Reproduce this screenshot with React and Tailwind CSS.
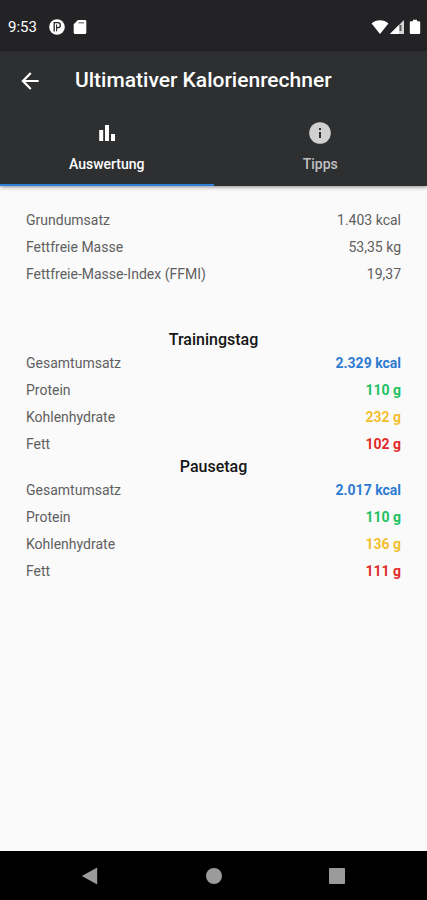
import React from "react";

const basics = [
  { label: "Grundumsatz", value: "1.403 kcal" },
  { label: "Fettfreie Masse", value: "53,35 kg" },
  { label: "Fettfreie-Masse-Index (FFMI)", value: "19,37" },
];

const days = [
  {
    title: "Trainingstag",
    rows: [
      { label: "Gesamtumsatz", value: "2.329 kcal", tone: "font-bold text-[#2f7bd2]" },
      { label: "Protein", value: "110 g", tone: "font-bold text-[#1fc163]" },
      { label: "Kohlenhydrate", value: "232 g", tone: "font-bold text-[#f3bf31]" },
      { label: "Fett", value: "102 g", tone: "font-bold text-[#e12a2a]" },
    ],
  },
  {
    title: "Pausetag",
    rows: [
      { label: "Gesamtumsatz", value: "2.017 kcal", tone: "font-bold text-[#2f7bd2]" },
      { label: "Protein", value: "110 g", tone: "font-bold text-[#1fc163]" },
      { label: "Kohlenhydrate", value: "136 g", tone: "font-bold text-[#f3bf31]" },
      { label: "Fett", value: "111 g", tone: "font-bold text-[#e12a2a]" },
    ],
  },
];

function StatusBar() {
  return (
    <div className="flex h-[51px] items-center justify-between bg-[#232325] pl-2 pr-1 pt-[2px] text-white">
      <div className="flex items-center gap-2">
        <span className="mr-1 text-[15px] leading-5">9:53</span>
        <svg viewBox="0 0 16 16" className="size-4" aria-hidden="true">
          <circle cx="8" cy="8" r="7.8" fill="#fff" />
          <path d="M5.2 12.6V3.700h3.600a2.500 2.500 0 0 1 0 5H7.600" fill="none" stroke="#232325" strokeWidth="1.3" />
          <path d="M7.600 5.600v6.600" stroke="#232325" strokeWidth="1.100" />
        </svg>
        <svg viewBox="0 0 14 16" className="h-4 w-3.5" aria-hidden="true">
          <path d="M5 1h7a1.300 1.300 0 0 1 1.300 1.300v11.400A1.300 1.300 0 0 1 12 15H2a1.300 1.300 0 0 1-1.300-1.300V5.300z" fill="#fff" />
          <path d="M5.500 3h5.500v1.500H5.500z" fill="#8a8a8d" />
        </svg>
      </div>
      <div className="flex items-center">
        <svg viewBox="0 0 18 16" className="h-4 w-[18px]" aria-hidden="true">
          <path d="M9 15 .6 4.400C3 2.400 5.800 1.300 9 1.300s6 1.100 8.400 3.100z" fill="#fff" />
        </svg>
        <svg viewBox="0 0 16 16" className="mr-[2px] size-4" aria-hidden="true">
          <path d="M15 1v14H1z" fill="#d6d6d7" />
          <path d="M10 6v9H1z" fill="#fff" />
          <path d="M10.500 6H12.500v6h-2z" fill="#5b5b5d" />
        </svg>
        <svg viewBox="0 0 16 16" className="size-4" aria-hidden="true">
          <path d="M6 .8h4v1.400h2.200a1 1 0 0 1 1 1V14a1 1 0 0 1-1 1H3.800a1 1 0 0 1-1-1V3.200a1 1 0 0 1 1-1H6z" fill="#fff" />
        </svg>
      </div>
    </div>
  );
}

function Header() {
  return (
    <header className="relative bg-[#2d2f31] text-white shadow-[0_1px_4px_rgba(0,0,0,0.45)]">
      <div className="flex h-[60px] items-center gap-[26px] pl-[11px]">
        <button type="button" aria-label="Zurück" className="flex size-[38px] items-center justify-center">
          <svg viewBox="0 0 24 24" className="size-[26px]" aria-hidden="true">
            <path d="M20 11H7.830l5.590-5.590L12 4l-8 8 8 8 1.410-1.410L7.830 13H20z" fill="#fff" />
          </svg>
        </button>
        <h1 className="text-[21px] font-medium">Ultimativer Kalorienrechner</h1>
      </div>
      <div role="tablist" className="grid grid-cols-2 text-sm font-medium leading-5">
        <button
          type="button"
          role="tab"
          aria-selected="true"
          className="flex h-[75px] flex-col items-center gap-[9px] border-b-2 border-[#2f80d6] pt-[10px]"
        >
          <svg viewBox="0 0 24 24" className="size-6" aria-hidden="true">
            <path d="M4.200 9h4v11h-4zM10 4h4v16h-4zM16 13h4v7h-4z" fill="#fff" />
          </svg>
          <span>Auswertung</span>
        </button>
        <button
          type="button"
          role="tab"
          aria-selected="false"
          className="flex h-[75px] flex-col items-center gap-[9px] pt-[10px] text-[#c0c1c2]"
        >
          <svg viewBox="0 0 24 24" className="size-6" aria-hidden="true">
            <circle cx="12" cy="12" r="10.800" fill="#d0d0d1" />
            <path d="M11 7h2v2h-2zM11 11h2v6h-2z" fill="#2d2f31" />
          </svg>
          <span>Tipps</span>
        </button>
      </div>
    </header>
  );
}

function ValueTable({ label, rows }) {
  return (
    <table aria-label={label} className="w-full text-sm leading-5 text-[#606060]">
      <tbody>
        {rows.map((row) => (
          <tr key={row.label} className="h-[27px]">
            <th scope="row" className="p-0 text-left font-normal">{row.label}</th>
            <td className={`p-0 text-right ${row.tone || ""}`}>{row.value}</td>
          </tr>
        ))}
      </tbody>
    </table>
  );
}

export default function App() {
  return (
    <div className="flex min-h-screen flex-col bg-[#fafafa] font-['Roboto',sans-serif]">
      <StatusBar />
      <Header />
      <main className="flex-1 px-[26px] pt-5">
        <ValueTable label="Grundwerte" rows={basics} />
        <div className="mt-[43px]">
          {days.map((day) => (
            <section key={day.title}>
              <h2 className="text-center text-base font-medium leading-[19px] text-[#151515]">{day.title}</h2>
              <ValueTable label={day.title} rows={day.rows} />
            </section>
          ))}
        </div>
      </main>
      <nav className="flex h-[49px] items-center justify-between bg-black px-[81px]">
        <button type="button" aria-label="Zurück">
          <svg viewBox="0 0 18 18" className="size-[18px]" aria-hidden="true">
            <path d="M.8 9 16.200.4v17.200z" fill="#9b9b9b" />
          </svg>
        </button>
        <button type="button" aria-label="Startseite">
          <svg viewBox="0 0 18 18" className="size-[18px]" aria-hidden="true">
            <circle cx="9" cy="9" r="8" fill="#9b9b9b" />
          </svg>
        </button>
        <button type="button" aria-label="Übersicht">
          <svg viewBox="0 0 18 18" className="size-[18px]" aria-hidden="true">
            <rect x="1" y="1" width="16" height="16" rx="1" fill="#9b9b9b" />
          </svg>
        </button>
      </nav>
    </div>
  );
}
